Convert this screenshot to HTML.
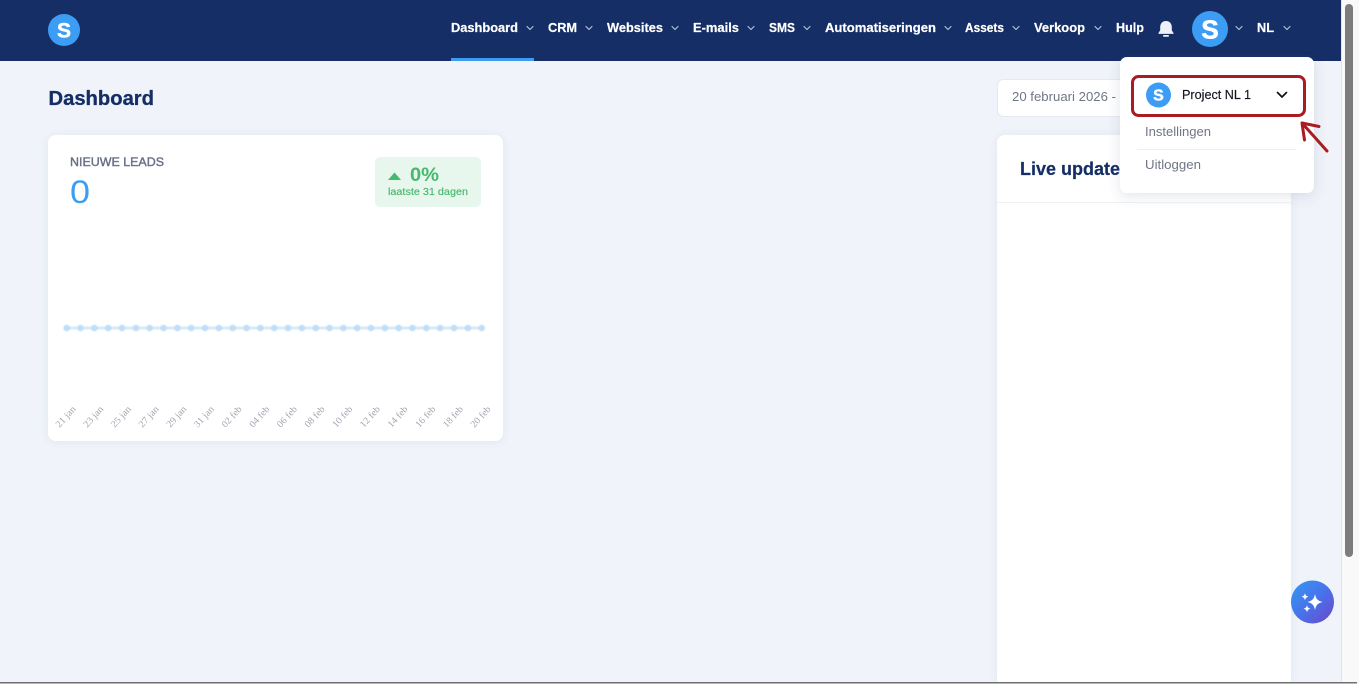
<!DOCTYPE html>
<html lang="nl">
<head>
<meta charset="utf-8">
<title>Dashboard</title>
<style>
html,body{margin:0;padding:0;width:1359px;height:685px;overflow:hidden;background:#f0f3f9}
svg{display:block;position:absolute;left:0;top:0}
text{font-family:"Liberation Sans",sans-serif}
.nav{font-size:12.5px;font-weight:700;fill:#fff;stroke:#fff;stroke-width:.2}
.chev{fill:none;stroke:#bcc6dc;stroke-width:1.1;stroke-linecap:round;stroke-linejoin:round}
.s{font-weight:700;fill:#fff;text-anchor:middle}
.lbl{font-family:"Liberation Serif",serif;font-size:9.5px;fill:#a0a5b0}
</style>
</head>
<body>
<svg width="1359" height="685" viewBox="0 0 1359 685" xmlns="http://www.w3.org/2000/svg">
<defs>
<linearGradient id="g" x1="0" y1="0" x2="1" y2="1"><stop offset="0" stop-color="#3498f5"/><stop offset=".55" stop-color="#4a6fe8"/><stop offset="1" stop-color="#6f45c8"/></linearGradient>
<filter id="sh" x="-20%" y="-20%" width="140%" height="150%"><feDropShadow dx="0" dy="3" stdDeviation="6" flood-color="#4a5a80" flood-opacity=".16"/></filter>
<filter id="sc" x="-5%" y="-5%" width="110%" height="110%"><feDropShadow dx="0" dy="1" stdDeviation="4" flood-color="#4a5a80" flood-opacity=".08"/></filter>
<filter id="bl" x="-5%" y="-200%" width="110%" height="500%"><feGaussianBlur stdDeviation=".6"/></filter>
<filter id="bt" x="-20%" y="-20%" width="140%" height="140%"><feGaussianBlur stdDeviation=".3"/></filter>
</defs>

<rect x="0" y="0" width="1359" height="685" fill="#f0f3f9"/>

<!-- scrollbar -->
<rect x="1341" y="0" width="18" height="685" fill="#f9f9f9"/>
<rect x="1341" y="0" width="1" height="685" fill="#e2e4e8"/>
<rect x="1345" y="4" width="8" height="553" rx="4" fill="#7d7d7d"/>

<!-- navbar -->
<rect x="0" y="0" width="1341" height="61" fill="#152e65"/>
<rect x="451" y="58" width="83" height="3" fill="#3d9bf0"/>
<circle cx="64" cy="30" r="16" fill="#3d9df5"/>
<text x="64" y="37.500" class="s" font-size="21" stroke="#fff" stroke-width=".5">S</text>

<text x="451" y="32" class="nav" textLength="67" lengthAdjust="spacingAndGlyphs">Dashboard</text>
<text x="548" y="32" class="nav" textLength="29" lengthAdjust="spacingAndGlyphs">CRM</text>
<text x="607" y="32" class="nav" textLength="56" lengthAdjust="spacingAndGlyphs">Websites</text>
<text x="693" y="32" class="nav" textLength="46" lengthAdjust="spacingAndGlyphs">E-mails</text>
<text x="769" y="32" class="nav" textLength="26" lengthAdjust="spacingAndGlyphs">SMS</text>
<text x="825" y="32" class="nav" textLength="111" lengthAdjust="spacingAndGlyphs">Automatiseringen</text>
<text x="965" y="32" class="nav" textLength="39" lengthAdjust="spacingAndGlyphs">Assets</text>
<text x="1034" y="32" class="nav" textLength="51" lengthAdjust="spacingAndGlyphs">Verkoop</text>
<text x="1116" y="32" class="nav" textLength="28" lengthAdjust="spacingAndGlyphs">Hulp</text>
<text x="1257" y="32" class="nav" textLength="17" lengthAdjust="spacingAndGlyphs">NL</text>

<g class="chev">
<path d="M527 26.500l3 3 3-3"/>
<path d="M586 26.500l3 3 3-3"/>
<path d="M672 26.500l3 3 3-3"/>
<path d="M748 26.500l3 3 3-3"/>
<path d="M804 26.500l3 3 3-3"/>
<path d="M945 26.500l3 3 3-3"/>
<path d="M1013 26.500l3 3 3-3"/>
<path d="M1095 26.500l3 3 3-3"/>
<path d="M1236 26.500l3 3 3-3"/>
<path d="M1284 26.500l3 3 3-3"/>
</g>

<!-- bell -->
<path d="M1166 21c-4 0-5.800 3-5.800 6.200v3l-1.700 2.800v.9h15v-.9l-1.700-2.800v-3c0-3.200-1.800-6.200-5.800-6.200z" fill="#eef1f7"/>
<rect x="1163" y="35" width="6" height="1.700" rx=".8" fill="#eef1f7"/>

<circle cx="1210" cy="29" r="18" fill="#3d9df5"/>
<text x="1210" y="38.500" class="s" font-size="26" stroke="#fff" stroke-width=".6">S</text>

<!-- heading -->
<text x="48.500" y="105" font-size="20" font-weight="700" fill="#152e65" stroke="#152e65" stroke-width=".3" textLength="105.500" lengthAdjust="spacingAndGlyphs">Dashboard</text>

<!-- date box -->
<rect x="997.500" y="79.500" width="290" height="37" rx="6" fill="#fff" stroke="#e6e9f0"/>
<text x="1012" y="101" font-size="12.500" fill="#6f7685" textLength="104" lengthAdjust="spacingAndGlyphs">20 februari 2026 -</text>

<!-- leads card -->
<rect x="48" y="135" width="455" height="306" rx="8" fill="#fff" filter="url(#sc)"/>
<text x="70" y="166" font-size="12" fill="#667088" stroke="#667088" stroke-width=".4" textLength="94" lengthAdjust="spacingAndGlyphs">NIEUWE LEADS</text>
<text x="70" y="203" font-size="32" fill="#3d9df0" textLength="20" lengthAdjust="spacingAndGlyphs">0</text>

<rect x="375" y="157" width="106" height="50" rx="5" fill="#e7f7ee"/>
<path d="M388 180l6.500-7.500 6.500 7.500z" fill="#47b96d"/>
<text x="410" y="181" font-size="19" font-weight="700" fill="#47b96d" textLength="29" lengthAdjust="spacingAndGlyphs">0%</text>
<text x="388" y="195" font-size="10.500" fill="#47b96d" stroke="#47b96d" stroke-width=".15" textLength="80" lengthAdjust="spacingAndGlyphs">laatste 31 dagen</text>

<!-- chart -->
<g filter="url(#bl)">
<line x1="66" y1="328" x2="482" y2="328" stroke="#d4e9fa" stroke-width="3"/>
<g fill="#c0def7">
<circle cx="66.700" cy="328" r="3.300"/><circle cx="80.500" cy="328" r="3.300"/><circle cx="94.400" cy="328" r="3.300"/><circle cx="108.200" cy="328" r="3.300"/><circle cx="122" cy="328" r="3.300"/><circle cx="135.900" cy="328" r="3.300"/><circle cx="149.700" cy="328" r="3.300"/><circle cx="163.500" cy="328" r="3.300"/><circle cx="177.400" cy="328" r="3.300"/><circle cx="191.200" cy="328" r="3.300"/><circle cx="205" cy="328" r="3.300"/><circle cx="218.900" cy="328" r="3.300"/><circle cx="232.700" cy="328" r="3.300"/><circle cx="246.500" cy="328" r="3.300"/><circle cx="260.400" cy="328" r="3.300"/><circle cx="274.200" cy="328" r="3.300"/><circle cx="288" cy="328" r="3.300"/><circle cx="301.900" cy="328" r="3.300"/><circle cx="315.700" cy="328" r="3.300"/><circle cx="329.500" cy="328" r="3.300"/><circle cx="343.400" cy="328" r="3.300"/><circle cx="357.200" cy="328" r="3.300"/><circle cx="371" cy="328" r="3.300"/><circle cx="384.900" cy="328" r="3.300"/><circle cx="398.700" cy="328" r="3.300"/><circle cx="412.500" cy="328" r="3.300"/><circle cx="426.400" cy="328" r="3.300"/><circle cx="440.200" cy="328" r="3.300"/><circle cx="454" cy="328" r="3.300"/><circle cx="467.900" cy="328" r="3.300"/><circle cx="481.700" cy="328" r="3.300"/>
</g>
</g>
<g filter="url(#bt)">
<text class="lbl" textLength="25" lengthAdjust="spacingAndGlyphs" transform="translate(59.500 428) rotate(-48)">21 jan</text>
<text class="lbl" textLength="25" lengthAdjust="spacingAndGlyphs" transform="translate(87.200 428) rotate(-48)">23 jan</text>
<text class="lbl" textLength="25" lengthAdjust="spacingAndGlyphs" transform="translate(114.800 428) rotate(-48)">25 jan</text>
<text class="lbl" textLength="25" lengthAdjust="spacingAndGlyphs" transform="translate(142.500 428) rotate(-48)">27 jan</text>
<text class="lbl" textLength="25" lengthAdjust="spacingAndGlyphs" transform="translate(170.200 428) rotate(-48)">29 jan</text>
<text class="lbl" textLength="25" lengthAdjust="spacingAndGlyphs" transform="translate(197.800 428) rotate(-48)">31 jan</text>
<text class="lbl" textLength="25" lengthAdjust="spacingAndGlyphs" transform="translate(225.500 428) rotate(-48)">02 feb</text>
<text class="lbl" textLength="25" lengthAdjust="spacingAndGlyphs" transform="translate(253.200 428) rotate(-48)">04 feb</text>
<text class="lbl" textLength="25" lengthAdjust="spacingAndGlyphs" transform="translate(280.800 428) rotate(-48)">06 feb</text>
<text class="lbl" textLength="25" lengthAdjust="spacingAndGlyphs" transform="translate(308.500 428) rotate(-48)">08 feb</text>
<text class="lbl" textLength="25" lengthAdjust="spacingAndGlyphs" transform="translate(336.200 428) rotate(-48)">10 feb</text>
<text class="lbl" textLength="25" lengthAdjust="spacingAndGlyphs" transform="translate(363.800 428) rotate(-48)">12 feb</text>
<text class="lbl" textLength="25" lengthAdjust="spacingAndGlyphs" transform="translate(391.500 428) rotate(-48)">14 feb</text>
<text class="lbl" textLength="25" lengthAdjust="spacingAndGlyphs" transform="translate(419.200 428) rotate(-48)">16 feb</text>
<text class="lbl" textLength="25" lengthAdjust="spacingAndGlyphs" transform="translate(446.800 428) rotate(-48)">18 feb</text>
<text class="lbl" textLength="25" lengthAdjust="spacingAndGlyphs" transform="translate(474.500 428) rotate(-48)">20 feb</text>
</g>

<!-- live updates card -->
<path d="M997 682V143a8 8 0 0 1 8-8h278a8 8 0 0 1 8 8v539z" fill="#fff" filter="url(#sc)"/>
<rect x="997" y="202" width="294" height="1" fill="#eef0f4"/>
<text x="1020" y="175" font-size="18" font-weight="700" fill="#152e65" stroke="#152e65" stroke-width=".2">Live updates</text>

<!-- dropdown -->
<rect x="1120" y="57" width="194" height="136" rx="7" fill="#fff" filter="url(#sh)"/>
<rect x="1132.500" y="76.500" width="172" height="39" rx="6" fill="#fff" stroke="#a81c22" stroke-width="3"/>
<circle cx="1158.500" cy="95" r="12.500" fill="#3d9df5"/>
<text x="1158.500" y="100.500" class="s" font-size="16" stroke="#fff" stroke-width=".4">S</text>
<text x="1182" y="99" font-size="12.500" fill="#11151f" stroke="#11151f" stroke-width=".15" textLength="69" lengthAdjust="spacingAndGlyphs">Project NL 1</text>
<path d="M1277.500 92.500l4.500 4.500 4.500-4.500" fill="none" stroke="#111" stroke-width="1.700" stroke-linecap="round" stroke-linejoin="round"/>
<text x="1145" y="136" font-size="12.500" fill="#6f7685" textLength="66" lengthAdjust="spacingAndGlyphs">Instellingen</text>
<rect x="1137" y="149" width="159" height="1" fill="#eceef2"/>
<text x="1145" y="169" font-size="12.500" fill="#6f7685" textLength="56" lengthAdjust="spacingAndGlyphs">Uitloggen</text>

<!-- arrow annotation -->
<path d="M1302 123l25 28M1302 123l17 3.500M1302 123l2.500 17" fill="none" stroke="#a81c22" stroke-width="3" stroke-linecap="round" stroke-linejoin="round"/>

<!-- assistant button -->
<circle cx="1312.500" cy="602" r="21.500" fill="url(#g)"/>
<path d="M1315 594c1 5 2.800 6.900 7.600 8-4.800 1.100-6.600 3-7.600 8-1-5-2.800-6.900-7.600-8 4.800-1.100 6.600-3 7.600-8z" fill="#fff"/>
<path d="M1305 593c.5 2.300 1.200 3 3.400 3.700-2.200.7-2.900 1.400-3.400 3.700-.5-2.300-1.200-3-3.400-3.700 2.200-.7 2.900-1.400 3.400-3.700z" fill="#fff"/>
<path d="M1307 605c.5 2.300 1.200 3 3.400 3.700-2.200.7-2.900 1.400-3.400 3.700-.5-2.300-1.200-3-3.400-3.700 2.200-.7 2.900-1.400 3.400-3.700z" fill="#fff"/>

<!-- window bottom edge -->
<rect x="0" y="683" width="1359" height="2" fill="#fff"/>
<rect x="0" y="682" width="1357" height="1.500" fill="#6f6f6f"/>
</svg>
</body>
</html>
